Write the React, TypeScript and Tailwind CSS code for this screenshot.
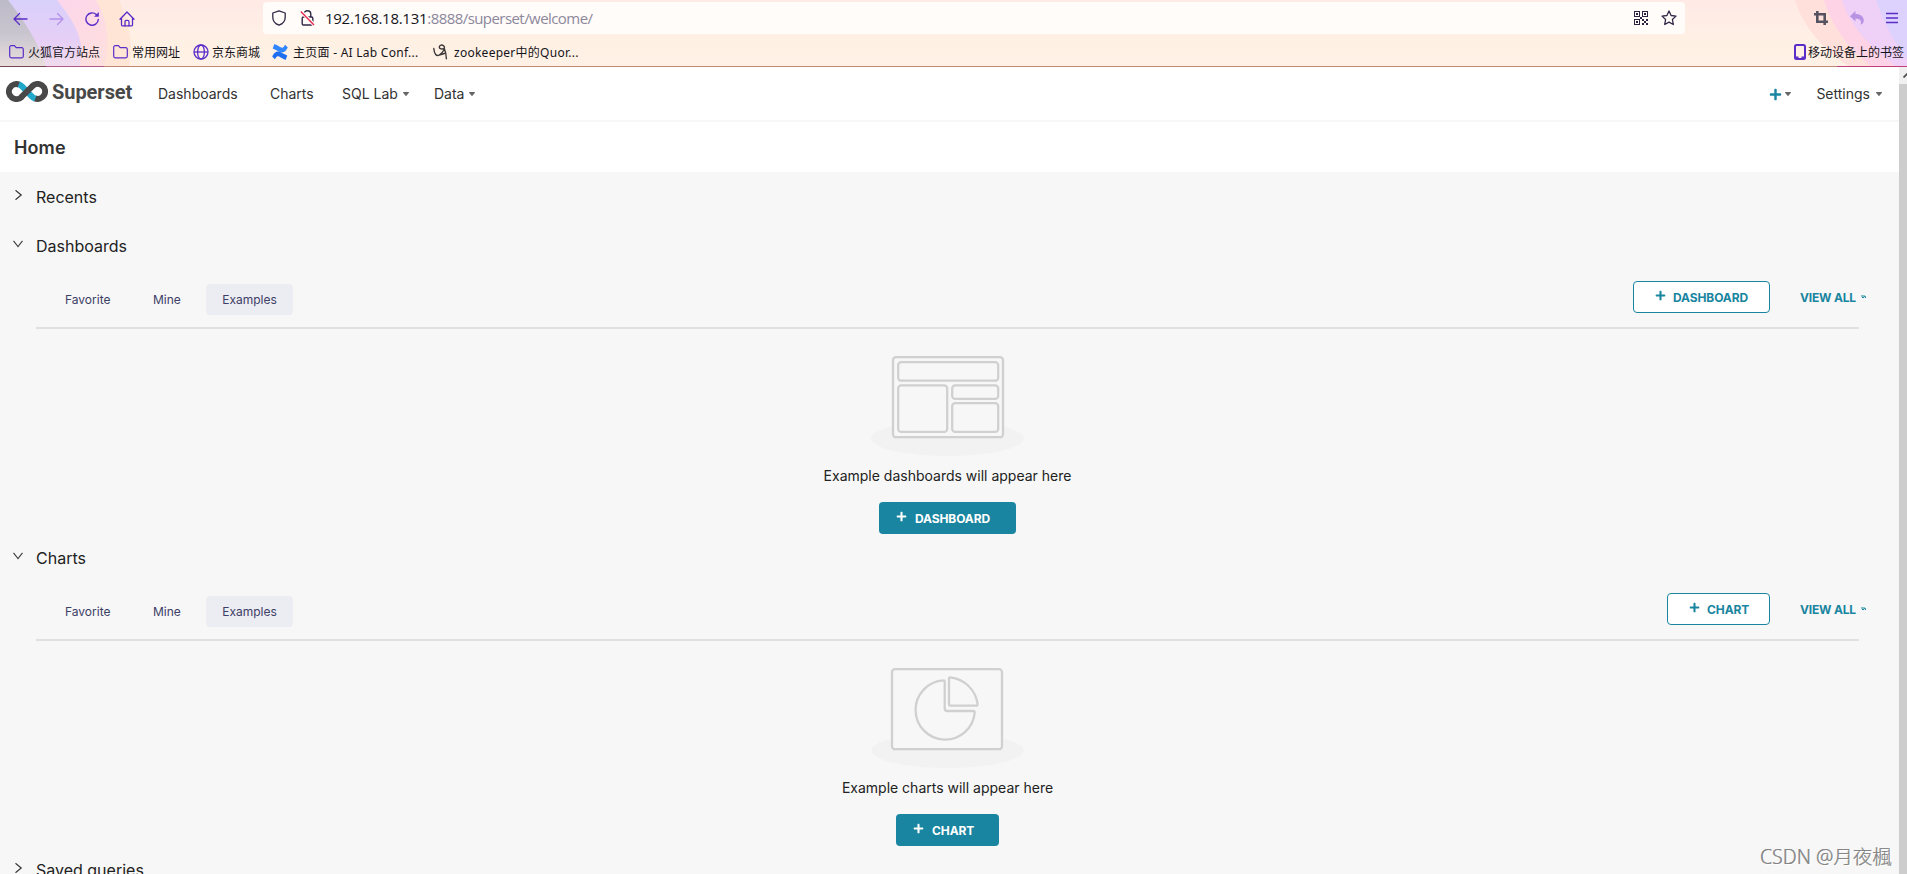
import { ReactNode } from "react";
import { FaPlus } from "react-icons/fa";

interface SectionProps {
    title: string;
    item: string;
    message: string;
    art: ReactNode;
    buttonWidth: string;
}

const bookmarkText = "text-[12px] leading-4 text-[#15141a] whitespace-nowrap mt-[2px]";

function ThemeArt() {
    return (
        <svg className="absolute inset-0 h-[67px] w-full" width="1907" height="67" viewBox="0 0 1907 67" preserveAspectRatio="none">
            <defs>
                <linearGradient id="base" x1="0" y1="0" x2="0" y2="1">
                    <stop offset="0" stopColor="#ffeae6" />
                    <stop offset="0.6" stopColor="#fff0e4" />
                    <stop offset="1" stopColor="#fff1e5" />
                </linearGradient>
                <linearGradient id="gray" x1="0" y1="0" x2="0" y2="1">
                    <stop offset="0" stopColor="#bdbbc8" />
                    <stop offset="0.5" stopColor="#c9c5cf" />
                    <stop offset="1" stopColor="#eadfdd" />
                </linearGradient>
                <linearGradient id="lavender" x1="0" y1="0" x2="0" y2="1">
                    <stop offset="0" stopColor="#d8d0fb" />
                    <stop offset="0.6" stopColor="#e6cff6" />
                    <stop offset="1" stopColor="#f1dced" />
                </linearGradient>
                <linearGradient id="pink" x1="0" y1="0" x2="1" y2="1">
                    <stop offset="0" stopColor="#fbd2f1" />
                    <stop offset="1" stopColor="#ffe0dc" />
                </linearGradient>
            </defs>
            <rect width="1907" height="67" fill="url(#base)" />
            <path d="M0 0H119C128 20 134 44 129 67H0Z" fill="#ffe5d6" />
            <path d="M0 0H96C108 22 111 44 104 67H0Z" fill="url(#pink)" />
            <path d="M0 0H57C75 22 87 44 79 67H0Z" fill="url(#lavender)" />
            <path d="M0 0H8C22 18 39 42 46 67H0Z" fill="url(#gray)" />
            <path d="M1795 0C1803 26 1823 50 1850 67H1907V0Z" fill="#ffe0db" />
            <path d="M1824 0C1832 27 1850 50 1872 67H1907V0Z" fill="#ffd3e6" />
            <path d="M1842 0C1850 28 1872 48 1897 67H1907V0Z" fill="#efd0f6" />
            <path d="M1876 0C1884 24 1895 43 1907 60V0Z" fill="#ddd2fd" />
        </svg>
    );
}

function FolderIcon() {
    return (
        <svg width="15" height="14" viewBox="0 0 15 14" fill="none" stroke="#5a2dc8" strokeWidth="1.2">
            <path d="M.7 2.2A1.5 1.5 0 0 1 2.2.7h3.2l1.8 2h5.6a1.5 1.5 0 0 1 1.5 1.5v7.1a1.5 1.5 0 0 1-1.5 1.5H2.2a1.5 1.5 0 0 1-1.5-1.5z" />
        </svg>
    );
}

function QrIcon() {
    return (
        <svg width="14" height="14" viewBox="0 0 14 14" fill="#2b2440" shapeRendering="crispEdges">
            <path fillRule="evenodd" d="M0 0h6v6H0zM1 1v4h4V1zM8 0h6v6H8zM9 1v4h4V1zM0 8h6v6H0zM1 9v4h4V9z" />
            <path d="M2 2h2v2H2zM10 2h2v2h-2zM2 10h2v2H2zM8 8h2v2H8zM10 10h2v2h-2zM12 8h2v2h-2zM8 12h2v2H8zM12 12h2v2h-2zM6 6h2v2H6z" />
        </svg>
    );
}

function BrowserChrome() {
    return (
        <header className="relative h-[67px] shrink-0">
            <ThemeArt />
            <div className="relative flex h-9 items-start pt-[2px]">
                <div className="flex h-8 w-[263px] items-center gap-[21px] pl-[13px] pt-px">
                    <svg width="15" height="14" viewBox="0 0 15 14" fill="none" stroke="#5a2dc8" strokeWidth="1.3" strokeLinecap="round" strokeLinejoin="round">
                        <path d="M14 7H1M6.5 1.5 1 7l5.5 5.5" />
                    </svg>
                    <svg width="15" height="14" viewBox="0 0 15 14" fill="none" stroke="#b491ea" strokeWidth="1.3" strokeLinecap="round" strokeLinejoin="round">
                        <path d="M1 7h13M8.5 1.5 14 7l-5.5 5.5" />
                    </svg>
                    <svg width="15" height="16" viewBox="0 0 15 16" fill="none" stroke="#5a2dc8" strokeWidth="1.4" strokeLinecap="round">
                        <path d="M13.3 8.5a6.2 6.2 0 1 1-2-5" />
                        <path d="M13.8 1v4.7H9.1z" fill="#5a2dc8" stroke="none" />
                    </svg>
                    <svg className="-ml-[2px]" width="16" height="16" viewBox="0 0 16 16" fill="none" stroke="#5a2dc8" strokeWidth="1.3" strokeLinejoin="round" strokeLinecap="round">
                        <path d="M1 8.2 8 1l7 7.2M2.5 7v6.7a1.2 1.2 0 0 0 1.2 1.2h8.6a1.2 1.2 0 0 0 1.2-1.2V7" />
                        <path d="M6 14.8v-4a1.5 1.5 0 0 1 1.5-1.5h1A1.5 1.5 0 0 1 10 10.8v4" />
                    </svg>
                </div>
                <div className="flex h-8 w-[1422px] items-center rounded bg-[#fffcfa] pl-[9px] pr-2">
                    <svg width="14" height="16" viewBox="0 0 14 16" fill="none" stroke="#2f2945" strokeWidth="1.3" strokeLinejoin="round">
                        <path d="M7 .8 13.2 3v4.2c0 4-3 6.8-6.2 8-3.2-1.2-6.2-4-6.2-8V3z" />
                    </svg>
                    <svg className="ml-[14px]" width="15" height="16" viewBox="0 0 15 16" fill="none" stroke="#2f2945" strokeWidth="1.4">
                        <path d="M4 7V4.2a3.4 3.4 0 0 1 6.8 0V7" />
                        <rect x="2.2" y="7" width="10.6" height="8" rx="1.2" />
                        <path d="M.8 1.2 14 14.8" stroke="#fffcfa" strokeWidth="3.5" />
                        <path d="M.8 1.5 14 15" stroke="#e8274f" />
                    </svg>
                    <span className="ml-[10px] font-['Open_Sans','Noto_Sans',sans-serif] text-[15px] tracking-[-0.28px] whitespace-nowrap text-[#15141a]">
                        192.168.18.131<span className="tracking-[-0.56px] text-[#8d879a]">:8888/superset/welcome/</span>
                    </span>
                    <div className="ml-auto flex items-center gap-[13px]">
                        <QrIcon />
                        <svg width="16" height="16" viewBox="0 0 16 16" fill="none" stroke="#2f2945" strokeWidth="1.3" strokeLinejoin="round">
                            <path d="m8 1 2.1 4.5 4.9.6-3.6 3.4.9 5L8 12.1l-4.3 2.4.9-5L1 6.1l4.9-.6z" />
                        </svg>
                    </div>
                </div>
                <div className="ml-auto flex h-8 items-center gap-[22px] pr-[9px]">
                    <svg className="-ml-px mr-px" width="14" height="14" viewBox="0 0 14 14" fill="none" stroke="#56525f" strokeWidth="2.6">
                        <path d="M3.3 0v10.7H14M0 3.3h10.7V14" />
                    </svg>
                    <svg className="-ml-px" width="14" height="14" viewBox="0 0 14 14" fill="#b893e4">
                        <path d="M5.5 0v3C10.5 3 13.8 5.5 13.8 9.3c0 2.3-1.3 3.9-3.3 4.5 1.6-3.4-.3-6.3-5-6.3v3L0 5.2z" />
                    </svg>
                    <svg width="12" height="12" viewBox="0 0 12 12" stroke="#5a2dc8" strokeWidth="1.3">
                        <path d="M0 1.5h12M0 6h12M0 10.5h12" />
                    </svg>
                </div>
            </div>
            <div className="relative flex h-[30px] items-center pl-[9px] pr-[3px] pt-px font-['Noto_Sans','Noto_Sans_CJK_SC',sans-serif]">
                <FolderIcon />
                <span className={`${bookmarkText} ml-1 w-[85px]`}>火狐官方站点</span>
                <FolderIcon />
                <span className={`${bookmarkText} ml-1 w-[61px]`}>常用网址</span>
                <svg width="16" height="16" viewBox="0 0 16 16" fill="none" stroke="#5a2dc8" strokeWidth="1.3">
                    <circle cx="8" cy="8" r="7" />
                    <ellipse cx="8" cy="8" rx="3.4" ry="7" />
                    <path d="M1 8h14" />
                </svg>
                <span className={`${bookmarkText} ml-[3px] w-[60px]`}>京东商城</span>
                <svg width="16" height="16" viewBox="0 0 16 16">
                    <path d="M.2 12.5C1.8 10 3 7.6 6 7.6c2.600 0 4.600 2.100 9.300 4L13.600 16c-4.500-1.800-6-3.700-7.800-3.700-1.200 0-2 1.500-2.900 3z" fill="#1d6ff0" />
                    <path d="M15.800 3.500C14.200 6 13 8.400 10 8.400c-2.600 0-4.600-2.100-9.300-4L2.400 0c4.500 1.800 6 3.700 7.800 3.700 1.200 0 2-1.500 2.900-3z" fill="#2f86ff" />
                </svg>
                <span className={`${bookmarkText} ml-[5px] w-[140px] tracking-[0.26px]`}>主页面 - AI Lab Conf...</span>
                <svg width="15" height="16" viewBox="0 0 15 16" fill="none" stroke="#3c3838" strokeWidth="1.4" strokeLinecap="round">
                    <path d="M.8 4.5c.4 5.500 2.700 8.200 5.500 6.500 2-1.200 3.700-3 5.200-6M10.500 1.800C9 .4 6.400 1 6.300 3s3 2.600 4.700 1.300c.8-.8.500-1.700-.5-2.500M6.300 11l5.200-1.500M11.500 5c1.200 3 1.700 6 1.900 9.800" />
                </svg>
                <span className={`${bookmarkText} ml-[6px] tracking-[0.26px]`}>zookeeper中的Quor...</span>
                <svg className="ml-auto" width="12" height="16" viewBox="0 0 12 16" fill="none" stroke="#5a2dc8" strokeWidth="2">
                    <rect x="1" y="1" width="10" height="14" rx="1.5" />
                    <path d="M1 13.5h3.500M7.500 13.500H11" />
                </svg>
                <span className={`${bookmarkText} ml-[2px]`}>移动设备上的书签</span>
            </div>
            <div className="relative h-px bg-[#bd8876]">
                <div className="absolute left-0 h-px w-[46px] bg-[#744859]" />
                <div className="absolute left-[46px] h-px w-[58px] bg-[#b0588a]" />
                <div className="absolute right-0 h-px w-[70px] bg-[#c0407e]" />
            </div>
        </header>
    );
}

function Caret() {
    return (
        <svg width="6" height="4" viewBox="0 0 6 4" fill="#666666">
            <path d="M.5 0h5a.5.5 0 0 1 .4.8L3.4 3.8a.5.5 0 0 1-.8 0L.1.8A.5.5 0 0 1 .5 0z" />
        </svg>
    );
}

function Logo() {
    return (
        <div className="flex w-[152px] items-center pl-[6px]">
            <svg className="-mt-[5px]" width="42" height="21" viewBox="0 0 42 21" fill="none" strokeWidth="6">
                <path d="M13.2 3.6a7.5 7.5 0 1 0 2.6 12.2M28.8 17.4a7.5 7.5 0 1 0-2.6-12.2" stroke="#484848" />
                <path d="M12.8 3.3c1.8.7 2.5 1.4 3.5 2.4l9.400 9.600c1 1 1.700 1.700 3.500 2.400" stroke="#20a7c9" />
                <path d="M15.3 16.2 26.7 4.8" stroke="#484848" />
            </svg>
            <span className="-mt-[4px] ml-[4px] font-[Roboto,sans-serif] text-[20px] font-bold leading-6 tracking-[-0.05px] text-[#484848]">Superset</span>
        </div>
    );
}

function Navbar() {
    return (
        <nav className="flex h-[55px] shrink-0 items-center border-b-2 border-[#f7f7f7] bg-white pt-px text-sm text-[#323232]">
            <Logo />
            <a className="ml-[6px] w-[112px]">Dashboards</a>
            <a className="w-[72px]">Charts</a>
            <a className="flex w-[92px] items-center gap-[5px] whitespace-nowrap">SQL Lab <Caret /></a>
            <a className="flex items-center gap-[5px]">Data <Caret /></a>
            <div className="ml-auto flex items-center pr-[17px]">
                <FaPlus className="text-[13px] text-[#1985a0]" />
                <span className="ml-[3px] mr-[25px]"><Caret /></span>
                <a className="mr-[6px]">Settings</a>
                <Caret />
            </div>
        </nav>
    );
}

function SectionHeader({ title, open }: { title: string; open?: boolean }) {
    return (
        <div className="flex h-[49px] shrink-0 items-center pt-px text-base text-[#222222]">
            <span className="flex w-9 pl-[13px] pb-[4px]">
                {open ? (
                    <svg width="10" height="8" viewBox="0 0 10 8" fill="none" stroke="#444444" strokeWidth="1.2">
                        <path d="m.5.8 4.500 5.700L9.500.8" />
                    </svg>
                ) : (
                    <svg className="ml-[2px]" width="8" height="10" viewBox="0 0 8 10" fill="none" stroke="#333333" strokeWidth="1.2">
                        <path d="m.5.3 5.700 4.700L.5 9.700" />
                    </svg>
                )}
            </span>
            {title}
        </div>
    );
}

function DashboardArt() {
    return (
        <svg width="161" height="110" viewBox="0 0 161 110" fill="#f7f7f7" stroke="#d0d0d0" strokeWidth="2.3">
            <ellipse cx="80.5" cy="88.5" rx="76.5" ry="17.5" fill="#f2f2f2" stroke="none" />
            <rect x="26" y="7.2" width="110" height="80" rx="3" />
            <rect x="31.2" y="12.2" width="100" height="18.5" rx="3" />
            <rect x="31.2" y="35.4" width="49" height="46.5" rx="3" />
            <rect x="85.2" y="35.4" width="46" height="13.5" rx="3" />
            <rect x="85.2" y="53.2" width="46" height="28.7" rx="3" />
        </svg>
    );
}

function ChartArt() {
    return (
        <svg width="161" height="110" viewBox="0 0 161 110" fill="#f7f7f7" stroke="#d0d0d0" strokeWidth="2.3">
            <ellipse cx="80.5" cy="88.5" rx="76" ry="17.5" fill="#f2f2f2" stroke="none" />
            <rect x="25" y="7.2" width="110" height="80" rx="3" />
            <path d="M76.7 18.4A29.6 29.6 0 1 0 107.7 50.3a1.3 1.3 0 0 0-1.3-1.3H80.2a2.5 2.5 0 0 1-2.5-2.5V19.4a1 1 0 0 0-1-1z" />
            <path d="M83.2 15.3a31 31 0 0 1 27.4 26.9 1.3 1.3 0 0 1-1.3 1.5H83.3a1.3 1.3 0 0 1-1.3-1.3V16.5a1.2 1.2 0 0 1 1.2-1.2z" />
        </svg>
    );
}

function Section({ title, item, message, art, buttonWidth }: SectionProps) {
    return (
        <section className="h-[312px] shrink-0">
            <SectionHeader title={title} open />
            <div className="ml-9 mr-10 flex h-[59px] items-start border-b-2 border-[#e0e0e0] text-xs text-[#3c4066]">
                <div className="flex pt-[14px] leading-[32px]">
                    <span className="w-[88px] pl-[29px]">Favorite</span>
                    <span className="w-[82px] pl-[29px]">Mine</span>
                    <span className="h-[31px] w-[87px] rounded bg-[#ecedf2] text-center">Examples</span>
                </div>
                <div className="-mr-[7px] ml-auto flex items-center pt-[11px] font-bold text-[#1985a0]">
                    <button className={`${buttonWidth} flex h-8 items-center rounded border border-[#1985a0] bg-white pl-[21px]`}>
                        <FaPlus className="mb-[3px] mr-[7px] text-[11px]" />
                        <span className="mt-px tracking-[-0.1px]">{item}</span>
                    </button>
                    <span className="ml-[30px] mt-px w-[61px] whitespace-nowrap tracking-[-0.2px]">VIEW ALL</span>
                    <svg width="5" height="5" viewBox="0 0 5 5" fill="none" stroke="#1985a0" strokeWidth="1.2">
                        <path d="M0 1h3.500L5 2.800M1 2.500h2" />
                    </svg>
                </div>
            </div>
            <div className="ml-9 mr-10 flex flex-col items-center pt-[21px]">
                {art}
                <p className="mt-[5px] text-sm leading-[22px] text-[#222222]">{message}</p>
                <button className={`${buttonWidth} mt-[15px] flex h-8 items-center rounded bg-[#1985a0] pl-[17px] text-xs font-bold text-white`}>
                    <FaPlus className="mb-[3px] mr-2 text-[11px]" />
                    <span className="mt-px tracking-[-0.1px]">{item}</span>
                </button>
            </div>
        </section>
    );
}

export default function App() {
    return (
        <div className="relative flex h-[874px] w-[1907px] flex-col overflow-hidden bg-[#f7f7f7] font-[Inter,'Liberation_Sans',sans-serif]">
            <BrowserChrome />
            <div className="flex min-h-0 flex-1">
                <main className="flex min-w-0 flex-1 flex-col overflow-hidden">
                    <Navbar />
                    <div className="flex h-[50px] shrink-0 items-center bg-white pl-[14px] pt-[2px] text-lg font-semibold tracking-[0.1px] text-[#323232]">Home</div>
                    <SectionHeader title="Recents" />
                    <Section title="Dashboards" item="DASHBOARD" message="Example dashboards will appear here" art={<DashboardArt />} buttonWidth="w-[137px]" />
                    <Section title="Charts" item="CHART" message="Example charts will appear here" art={<ChartArt />} buttonWidth="w-[103px]" />
                    <SectionHeader title="Saved queries" />
                </main>
                <div className="w-2 shrink-0 overflow-hidden bg-[#cdcdcd]">
                    <div className="flex h-[17px] items-center bg-[#f0f0f0] pl-1">
                        <svg className="shrink-0" width="8" height="5" viewBox="0 0 8 5" fill="none" stroke="#505050" strokeWidth="1.8">
                            <path d="m.5 4.500 3.500-3.500 3.500 3.500" />
                        </svg>
                    </div>
                </div>
            </div>
            <span className="absolute right-[15px] bottom-[5px] whitespace-nowrap font-['Noto_Sans','Noto_Sans_CJK_TC',sans-serif] text-[19.5px] font-light leading-6 text-[#858585] [text-shadow:1px_1px_0_#ffffff,-0.5px_0_0_#9a9a9a]">
                CSDN @月夜楓
            </span>
        </div>
    );
}
